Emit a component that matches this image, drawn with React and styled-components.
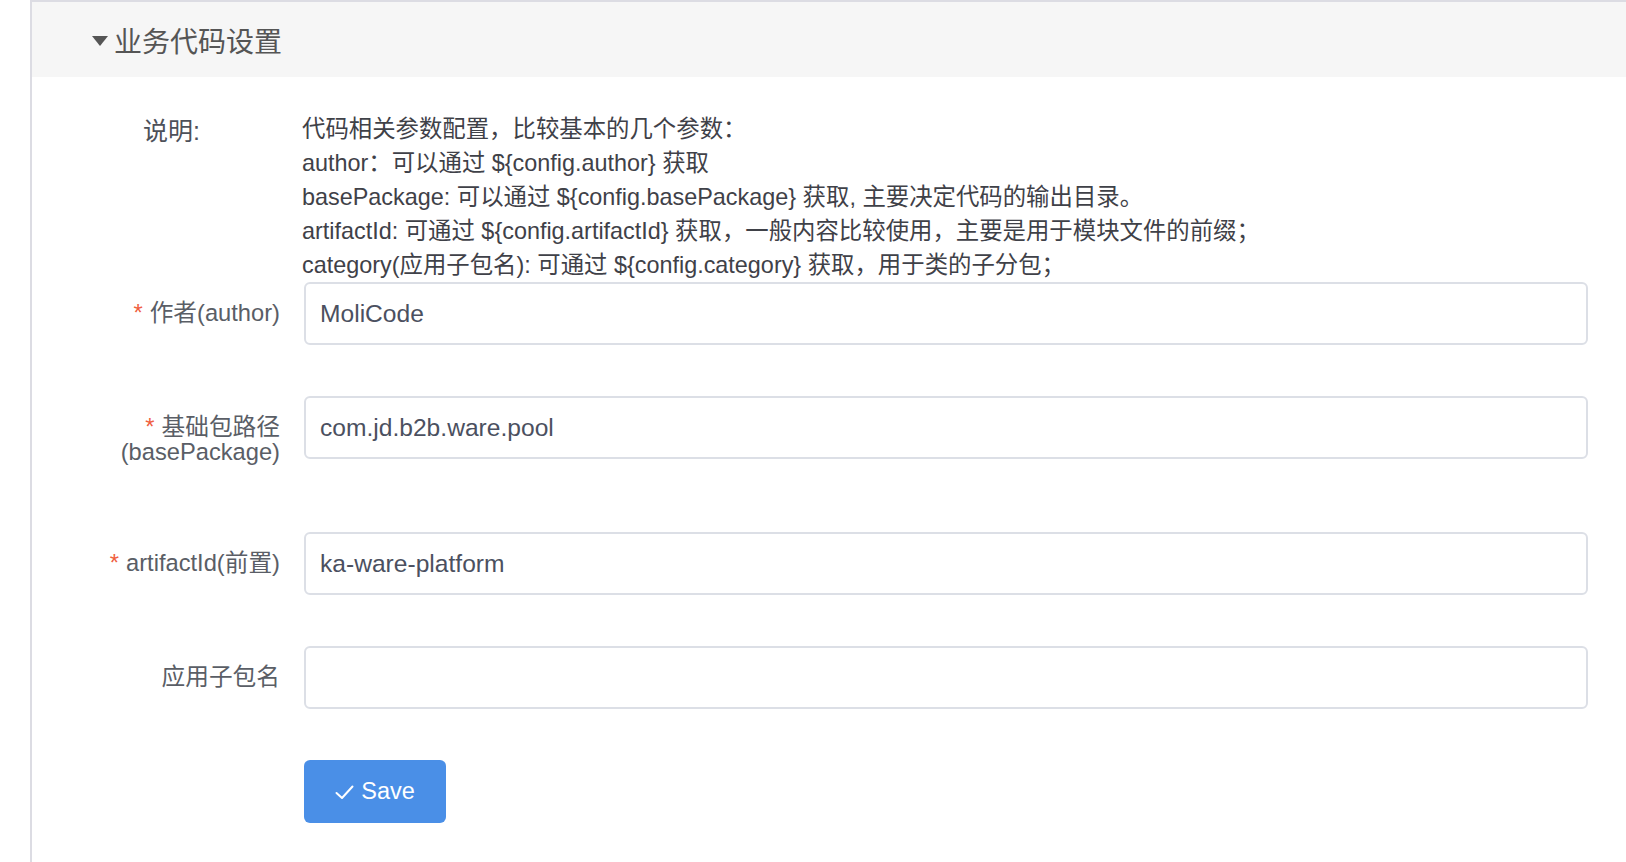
import React from 'react'
import styled, { createGlobalStyle } from 'styled-components'

const GlobalStyle = createGlobalStyle`
  html, body {
    margin: 0;
    background: #fff;
    font-family: "Liberation Sans", "Noto Sans CJK SC", sans-serif;
  }
  * { box-sizing: border-box; }
`

const Panel = styled.div`
  margin-left: 30px;
  min-height: 100vh;
  border-left: 2px solid #dcdce3;
  border-top: 2px solid #dcdce3;
`

const Header = styled.div`
  height: 75px;
  background: #f6f6f6;
  display: flex;
  align-items: center;
  padding-left: 60px;
  gap: 6px;
  font-size: 28px;
  color: #555;
`

const Caret = styled.span`
  width: 0;
  height: 0;
  border-left: 8px solid transparent;
  border-right: 8px solid transparent;
  border-top: 10px solid #555;
  margin-top: 2px;
`

const Body = styled.div`
  padding: 35px 38px 40px 0;
`

const Desc = styled.div`
  display: grid;
  grid-template-columns: 159px 1fr;
  padding-left: 111px;
`

const DescLabel = styled.div`
  font-size: 25px;
  line-height: 34px;
  padding-top: 2px;
  color: #4e5159;
`

const DescText = styled.div`
  font-size: 23.4px;
  line-height: 34px;
  color: #3f4148;
`

const Row = styled.div`
  display: grid;
  grid-template-columns: 248px 1fr;
  column-gap: 24px;
  align-items: start;
  margin-bottom: ${p => p.$last ? 0 : 51}px;
`

const Label = styled.label`
  text-align: right;
  font-size: 23.7px;
  line-height: 25px;
  padding: 19px 0 16px;
  color: #5a5e66;
`

const Star = styled.span`
  color: #f0603f;
  margin-right: 7px;
`

const Input = styled.input`
  width: 100%;
  height: 63px;
  border: 2px solid #dcdfe6;
  border-radius: 6px;
  padding: 0 14px;
  font-family: inherit;
  font-size: 24.6px;
  color: #4b5060;
  background: #fff;
  outline: none;
`

const SaveButton = styled.button`
  width: 142px;
  height: 63px;
  border: none;
  border-radius: 6px;
  background: #4a8fe7;
  color: #fff;
  font-family: inherit;
  font-size: 23.5px;
  display: flex;
  align-items: center;
  justify-content: center;
  gap: 7px;
  cursor: pointer;
  svg { margin-top: 1px; }
`

const lines = [
  '代码相关参数配置，比较基本的几个参数：',
  'author：可以通过 ${config.author} 获取',
  'basePackage: 可以通过 ${config.basePackage} 获取, 主要决定代码的输出目录。',
  'artifactId: 可通过 ${config.artifactId} 获取，一般内容比较使用，主要是用于模块文件的前缀；',
  'category(应用子包名): 可通过 ${config.category} 获取，用于类的子分包；',
]

const fields = [
  { label: ['作者(author)'], required: true, value: 'MoliCode' },
  { label: ['基础包路径', '(basePackage)'], required: true, value: 'com.jd.b2b.ware.pool' },
  { label: ['artifactId(前置)'], required: true, value: 'ka-ware-platform' },
  { label: ['应用子包名'], required: false, value: '' },
]

function App() {
  return (
    <>
      <GlobalStyle />
      <Panel>
        <Header>
          <Caret />
          业务代码设置
        </Header>
        <Body>
          <Desc>
            <DescLabel>说明:</DescLabel>
            <DescText>
              {lines.map(l => <div key={l}>{l}</div>)}
            </DescText>
          </Desc>
          {fields.map(f => (
            <Row key={f.label[0]}>
              <Label>
                {f.required && <Star>*</Star>}
                {f.label[0]}
                {f.label[1] && <><br />{f.label[1]}</>}
              </Label>
              <Input defaultValue={f.value} />
            </Row>
          ))}
          <Row $last>
            <span />
            <SaveButton>
              <svg width="19" height="15" viewBox="0 0 19 15" fill="none">
                <polyline points="1.5,8 7,13 17.5,1.5" stroke="#fff" strokeWidth="2" strokeLinecap="round" strokeLinejoin="round" />
              </svg>
              Save
            </SaveButton>
          </Row>
        </Body>
      </Panel>
    </>
  )
}

export default App
